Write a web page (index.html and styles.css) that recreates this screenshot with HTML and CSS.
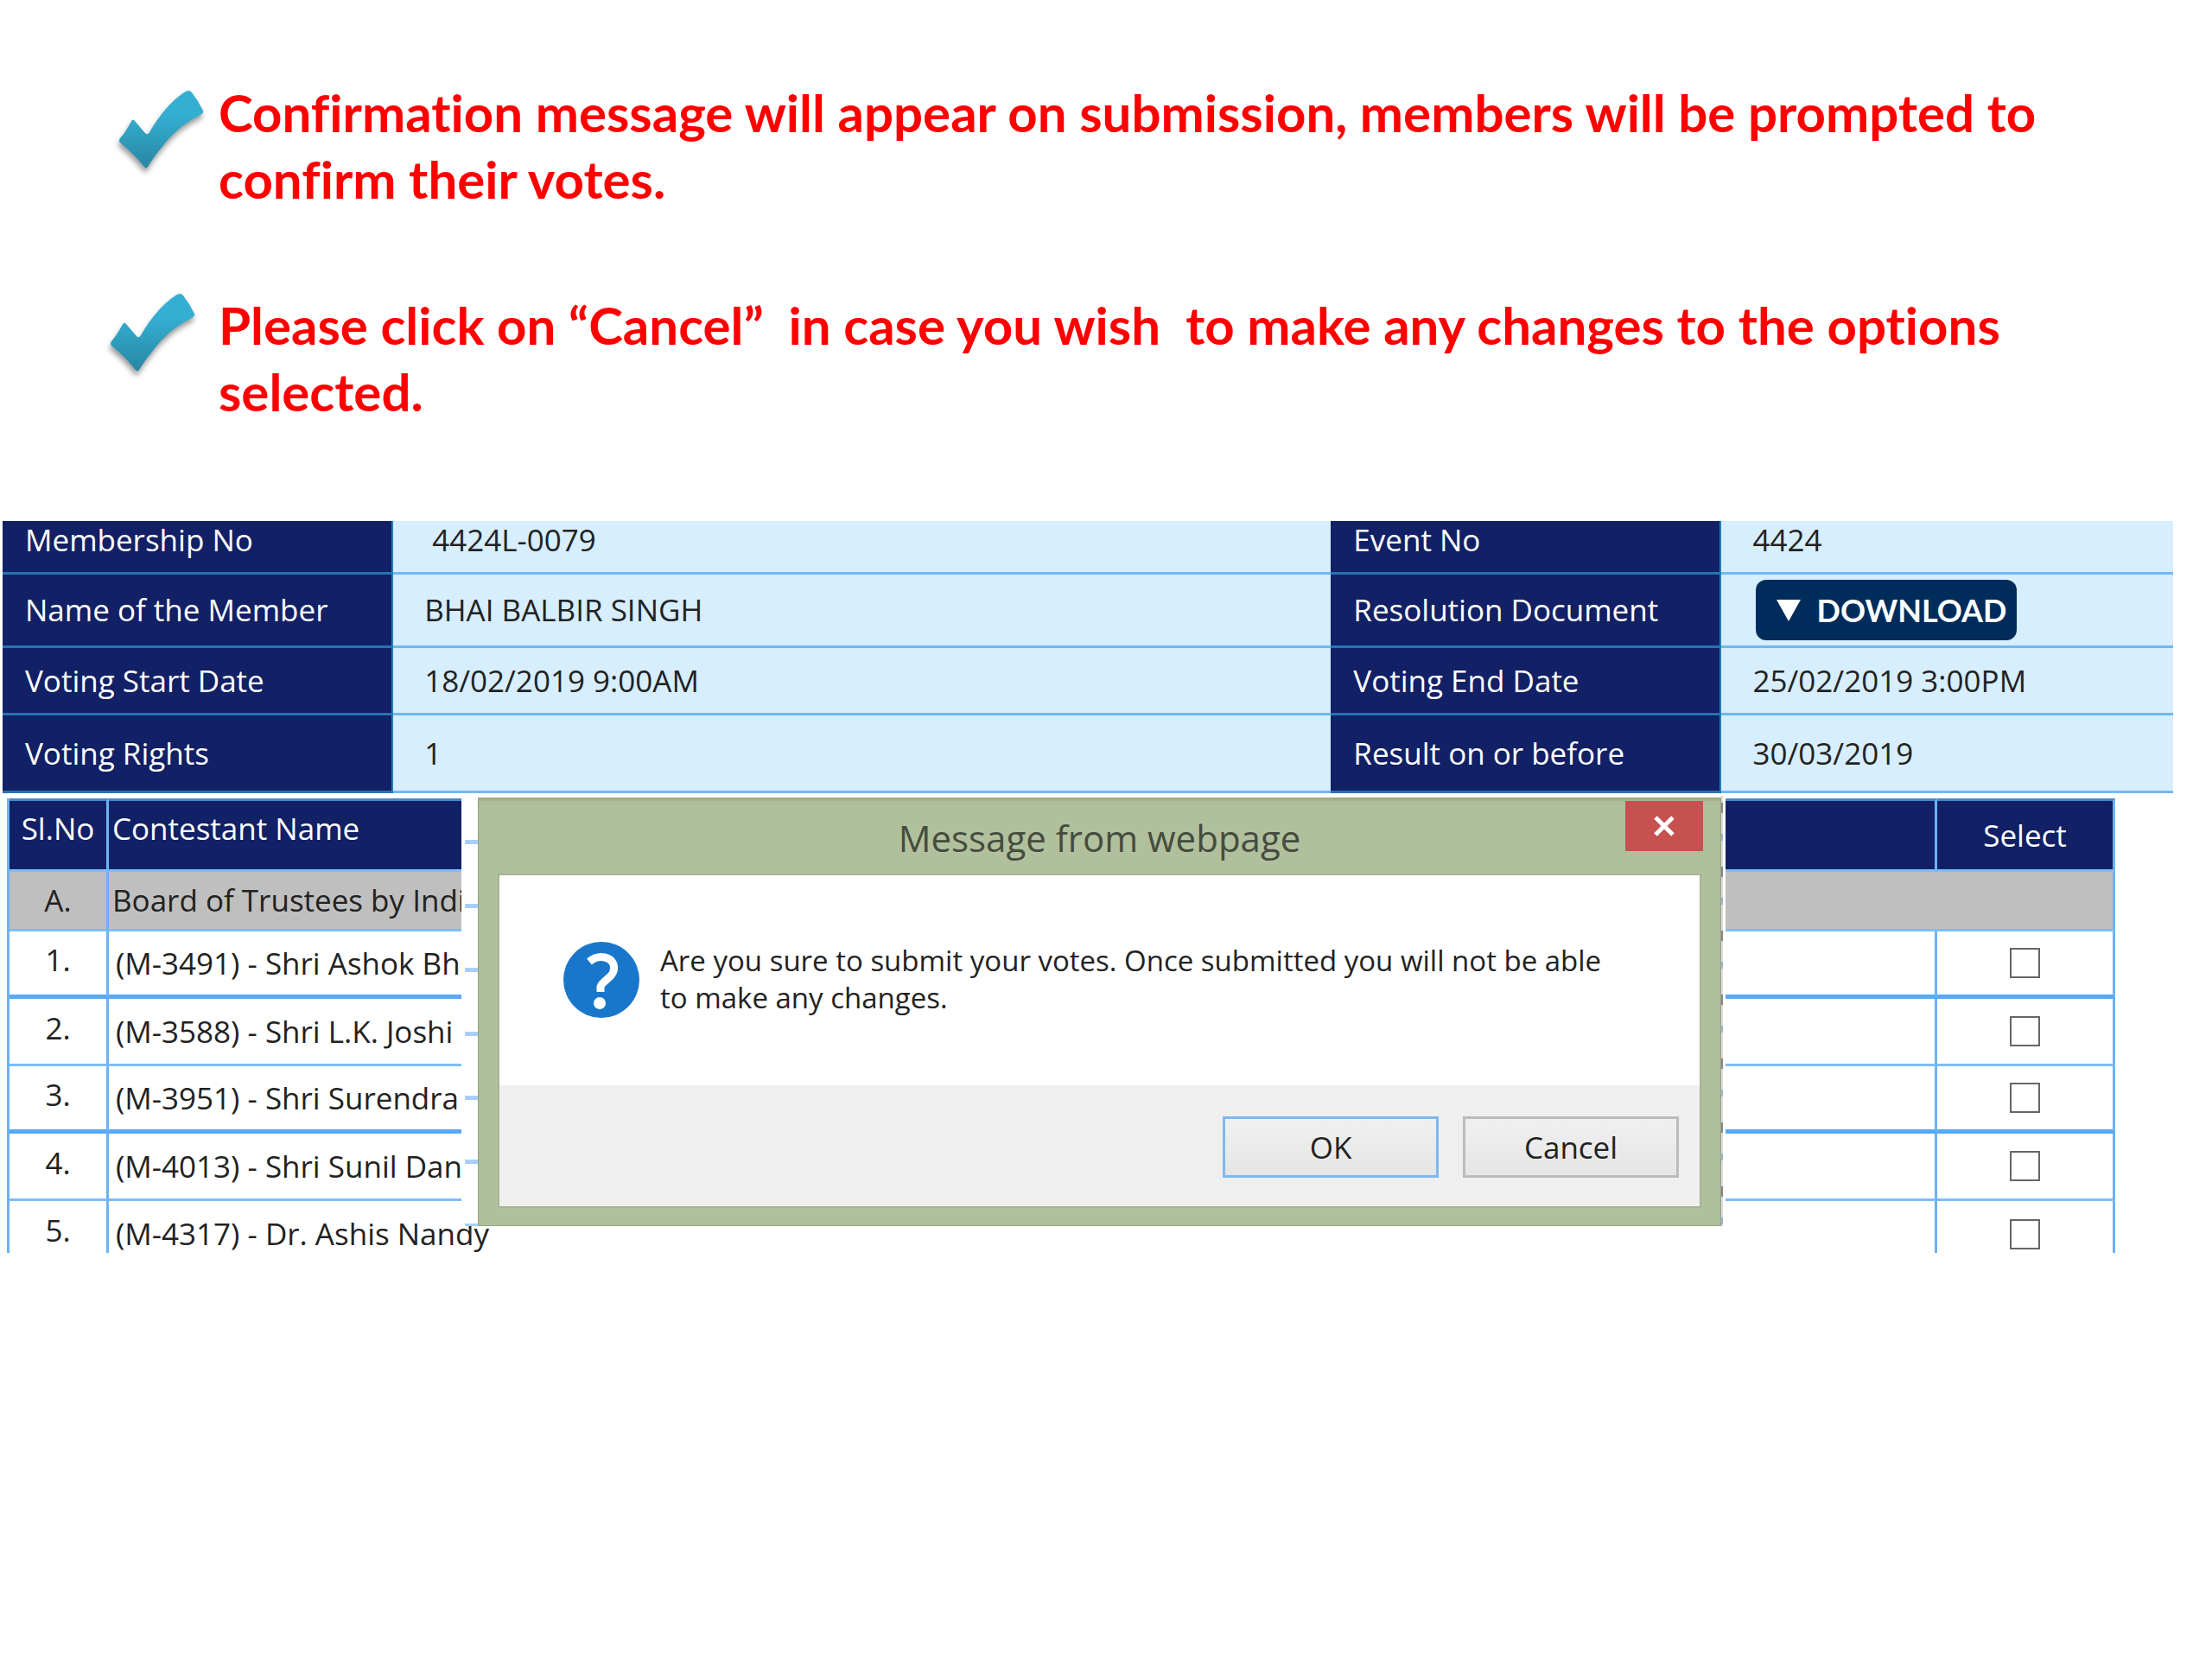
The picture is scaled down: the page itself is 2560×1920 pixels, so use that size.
FILE: index.html
```html
<!DOCTYPE html>
<html lang="en">
<head>
    <meta charset="UTF-8">
    <meta name="viewport" content="width=device-width, initial-scale=1.0">
    <title>Confirm your votes</title>
    <link rel="stylesheet" href="styles.css">
</head>
<body>
    <svg class="defs" width="0" height="0" aria-hidden="true">
        <defs>
            <linearGradient id="tickFill" x1="0" y1="0" x2="0" y2="1">
                <stop offset="0.3" stop-color="#34afd2"/>
                <stop offset="1" stop-color="#2787a2"/>
            </linearGradient>
            <symbol id="tick" viewBox="0 0 100 92">
                <path d="M15 36 Q17 33 19 36 L31 50 Q34 53 36 49 Q54 18 76 3 Q82 -1 85 3 Q92 12 98 24 Q99 27 95 29 Q68 42 49 68 Q42 76 34 89 Q32 92 29 88 Q18 74 2 61 Q0 59 2 56 Q9 48 15 36 Z" fill="url(#tickFill)"/>
            </symbol>
        </defs>
    </svg>

    <div class="instructions">
        <div class="instruction">
            <svg class="tick"><use href="#tick"/></svg>
            <p>Confirmation message will appear on submission, members will be prompted to confirm their votes.</p>
        </div>
        <div class="instruction outdent">
            <svg class="tick"><use href="#tick"/></svg>
            <p>Please click on “Cancel”&nbsp; in case you wish&nbsp; to make any changes to the options selected.</p>
        </div>
    </div>

    <table class="info">
        <colgroup>
            <col class="col-label">
            <col class="col-wide">
            <col class="col-label">
            <col>
        </colgroup>
        <tr class="row-first">
            <th>Membership No</th>
            <td>&nbsp;4424L-0079</td>
            <th>Event No</th>
            <td>4424</td>
        </tr>
        <tr class="row-name">
            <th>Name of the Member</th>
            <td>BHAI BALBIR SINGH</td>
            <th>Resolution Document</th>
            <td>
                <button class="download" type="button">
                    <svg width="28" height="25" viewBox="0 0 28 25"><path d="M0 0H28L14 25Z" fill="#fff"/></svg>
                    DOWNLOAD
                </button>
            </td>
        </tr>
        <tr class="row-dates">
            <th>Voting Start Date</th>
            <td>18/02/2019 9:00AM</td>
            <th>Voting End Date</th>
            <td>25/02/2019 3:00PM</td>
        </tr>
        <tr class="row-rights">
            <th>Voting Rights</th>
            <td>1</td>
            <th>Result on or before</th>
            <td>30/03/2019</td>
        </tr>
    </table>

    <div class="ballot">
        <table class="contestants">
            <colgroup>
                <col class="col-no">
                <col>
                <col class="col-select">
            </colgroup>
            <thead>
                <tr>
                    <th class="raised">Sl.No</th>
                    <th class="name raised">Contestant Name</th>
                    <th>Select</th>
                </tr>
            </thead>
            <tbody>
                <tr class="group">
                    <td>A.</td>
                    <td class="name" colspan="2">Board of Trustees by Indi</td>
                </tr>
                <tr class="thick">
                    <td class="no">1.</td>
                    <td class="name"><label for="c1">(M-3491) - Shri Ashok Bh</label></td>
                    <td><input type="checkbox" id="c1"></td>
                </tr>
                <tr>
                    <td class="no">2.</td>
                    <td class="name"><label for="c2">(M-3588) - Shri L.K. Joshi</label></td>
                    <td><input type="checkbox" id="c2"></td>
                </tr>
                <tr class="thick">
                    <td class="no">3.</td>
                    <td class="name"><label for="c3">(M-3951) - Shri Surendra</label></td>
                    <td><input type="checkbox" id="c3"></td>
                </tr>
                <tr>
                    <td class="no">4.</td>
                    <td class="name"><label for="c4">(M-4013) - Shri Sunil Dan</label></td>
                    <td><input type="checkbox" id="c4"></td>
                </tr>
                <tr class="last">
                    <td class="no">5.</td>
                    <td class="name"><label for="c5">(M-4317) - Dr. Ashis Nandy</label></td>
                    <td><input type="checkbox" id="c5"></td>
                </tr>
            </tbody>
        </table>

        <div class="overlay">
            <div class="dialog" role="dialog" aria-labelledby="dialogTitle">
                <div class="dialog-title">
                    <h2 id="dialogTitle">Message from webpage</h2>
                    <button class="close" type="button" aria-label="Close">
                        <svg width="26" height="24" viewBox="0 0 26 24"><path d="M3 2L23 22M23 2L3 22" stroke="#fff" stroke-width="5"/></svg>
                    </button>
                </div>
                <div class="dialog-window">
                    <div class="dialog-body">
                        <svg class="question" viewBox="0 0 88 88">
                            <circle cx="44" cy="44" r="44" fill="#1877cb"/>
                            <path d="M30 23C36 18 43 17 48 18C57 20 60 27 58 34C56 42 45 45 43 52V58" fill="none" stroke="#fff" stroke-width="9"/>
                            <circle cx="42" cy="71" r="7" fill="#fff"/>
                        </svg>
                        <p>Are you sure to submit your votes. Once submitted you will not be able<br>to make any changes.</p>
                    </div>
                    <div class="dialog-footer">
                        <button class="btn primary" type="button">OK</button>
                        <button class="btn" type="button">Cancel</button>
                    </div>
                </div>
            </div>
        </div>
    </div>
</body>
</html>
```

FILE: styles.css
```css
* {
    box-sizing: border-box;
}
body {
    margin: 0;
    background: #fff;
    color: #222;
    font-family: "Open Sans", "Noto Sans", sans-serif;
    font-size: 35px;
}
.defs {
    display: block;
}

/* instructions */
.instructions {
    display: flex;
    flex-direction: column;
    gap: 92px;
    padding: 92px 100px 111px 137px;
}
.instruction {
    display: flex;
    align-items: flex-start;
    gap: 16px;
}
.instruction.outdent {
    gap: 26px;
    margin-left: -10px;
}
.instruction p {
    flex: 1;
    margin: 0;
    color: #f00;
    font-family: Lato, sans-serif;
    font-size: 60px;
    font-weight: bold;
    font-variant-ligatures: none;
    line-height: 77px;
}
.tick {
    flex: none;
    width: 100px;
    height: 92px;
    margin-top: 12px;
    overflow: visible;
    filter: drop-shadow(-1px 5px 3px rgba(0, 0, 0, 0.4));
}
.outdent .tick {
    margin-top: 1px;
}

/* member and event details */
table {
    table-layout: fixed;
    border-collapse: separate;
    border-spacing: 0;
    line-height: 42px;
}
th {
    font-weight: normal;
    color: #fff;
    background: #122065;
}
.info {
    width: calc(100% - 48px);
    margin-left: 3px;
}
.info .col-label {
    width: 18%;
}
.info .col-wide {
    width: 43.2%;
}
.info th,
.info td {
    padding: 0 0 0 26px;
    border-bottom: 3px solid #72b8f3;
    text-align: left;
    white-space: nowrap;
}
.info th {
    border-bottom-color: #2873ad;
    border-right: 2px solid #2080b8;
}
.info td {
    padding-left: 36px;
    background: #d6eefe;
}
.row-first {
    height: 62px;
}
.info .row-first th,
.info .row-first td {
    padding-bottom: 16px;
}
.row-name {
    height: 85px;
}
.row-dates {
    height: 78px;
}
.row-rights {
    height: 90px;
}
.download {
    display: flex;
    align-items: center;
    justify-content: space-between;
    width: 302px;
    height: 70px;
    margin-left: 4px;
    padding: 0 12px 0 24px;
    border: none;
    border-radius: 12px;
    background: #002c5b;
    color: #fff;
    font-family: Lato, sans-serif;
    font-size: 36px;
    font-weight: bold;
}

/* contestants */
.ballot {
    position: relative;
    padding: 6px 112px 0 8px;
}
.contestants {
    width: 100%;
    border-left: 3px solid #6ab3f7;
}
.col-no {
    width: 115px;
}
.col-select {
    width: 206px;
}
.contestants tr {
    height: 78px;
}
.contestants th,
.contestants td {
    padding: 0;
    border-right: 3px solid #6ab3f7;
    border-bottom: 3px solid #7ebcf8;
    text-align: center;
    white-space: nowrap;
}
.contestants thead tr {
    height: 85px;
}
.contestants th {
    border-top: 3px solid #3f8ad6;
}
.contestants .raised {
    padding-bottom: 16px;
}
.contestants .name {
    padding-left: 4px;
    text-align: left;
}
.contestants .group {
    height: 69px;
    background: #bfbfbf;
}
.contestants .thick td {
    border-bottom: 5px solid #58a9f6;
}
.contestants .no {
    padding-bottom: 8px;
}
.contestants .last {
    height: 60px;
}
.contestants .last td {
    padding-top: 16px;
    border-bottom: none;
}
.contestants .last .no {
    padding: 8px 0 0;
}
.contestants input {
    display: block;
    appearance: none;
    width: 35px;
    height: 35px;
    margin: 0 auto;
    border: 2px solid #666;
    background: #fff;
}
.contestants label {
    padding-left: 4px;
}

/* confirm dialog, with the ends of the row lines showing on both sides */
.overlay {
    position: absolute;
    top: 3px;
    left: 534px;
    right: 563px;
    height: 498px;
    padding: 2px 5px 0 19px;
    background:
        repeating-linear-gradient(#fff 0 51px, #a9cff8 51px 56px, #fff 56px 74px) 4px 0 / 16px 100% no-repeat,
        repeating-linear-gradient(#ddd 0 8px, #888 8px 20px, #ddd 20px 44px, #9ab4d0 44px 52px, #ddd 52px 74px) right 3px top 0 / 2px 100% no-repeat,
        #fff;
}
.dialog {
    display: flex;
    flex-direction: column;
    height: 496px;
    padding: 0 24px 22px;
    border: 1px solid #98a486;
    background: #b1c09c;
    box-shadow: inset 0 3px 2px #a3ad93;
}
.dialog-title {
    position: relative;
    height: 89px;
}
.dialog-title h2 {
    margin: 0;
    color: #454c3e;
    font-size: 42px;
    font-weight: normal;
    line-height: 92px;
    text-align: center;
}
.close {
    position: absolute;
    top: 3px;
    right: -4px;
    display: flex;
    align-items: center;
    justify-content: center;
    width: 90px;
    height: 58px;
    padding: 0;
    border: none;
    background: #c75050;
}
.dialog-window {
    display: flex;
    flex: 1;
    flex-direction: column;
    background: #fff;
    box-shadow: 0 0 0 2px #a7b492;
}
.dialog-body {
    display: flex;
    flex: 1;
    align-items: flex-start;
    gap: 24px;
    padding: 77px 24px 0 74px;
}
.dialog-body p {
    margin: 0;
    color: #222;
    font-size: 33px;
    line-height: 43px;
    white-space: nowrap;
}
.question {
    flex: none;
    width: 88px;
    height: 88px;
}
.dialog-footer {
    display: flex;
    justify-content: flex-end;
    gap: 28px;
    height: 140px;
    padding: 36px 24px 0;
    background: #efefef;
}
.btn {
    width: 250px;
    height: 71px;
    padding: 0;
    border: 3px solid #bcbcbc;
    background: linear-gradient(#f0f0f0, #e5e5e5);
    color: #222;
    font-family: inherit;
    font-size: 35px;
}
.btn.primary {
    border-color: #7eb8f2;
}
```
